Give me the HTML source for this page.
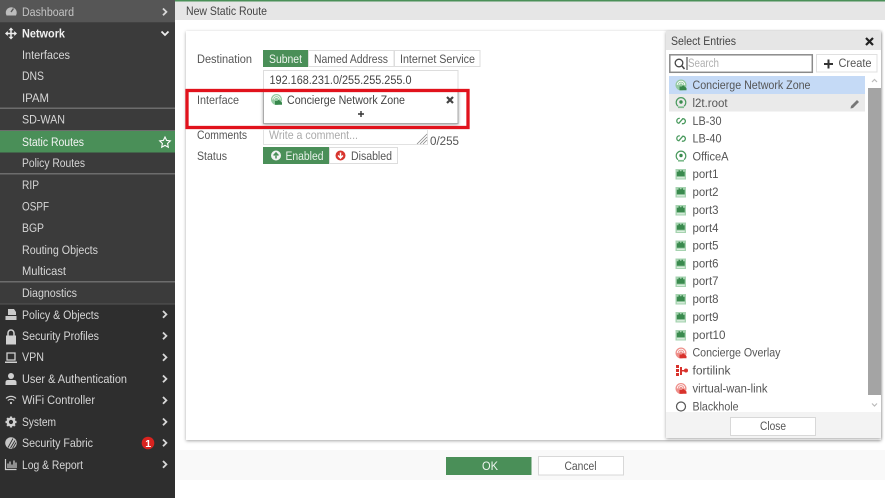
<!DOCTYPE html>
<html><head><meta charset="utf-8"><style>
html,body{margin:0;padding:0;background:#fff;width:885px;height:498px;overflow:hidden}
svg{display:block;filter:blur(.35px)}
text{font-family:"Liberation Sans",sans-serif;font-size:12.2px}
.s text{fill:#d6d6d6}
.m text{fill:#555}
</style></head><body>
<svg width="885" height="498" viewBox="0 0 885 498" xmlns="http://www.w3.org/2000/svg">
<defs>
<filter id="sh" x="-5%" y="-5%" width="110%" height="110%"><feDropShadow dx="0" dy="1" stdDeviation="1.6" flood-color="#000" flood-opacity=".35"/></filter>
<g id="port"><rect x="0" y="0" width="10.500" height="10.500" fill="#a6d3b0"/><path d="M1.300 7.300V2.800H3V1.200H4.500V2.200H6V1.200H7.500V2.800H9.200V7.300Z" fill="#3a8a4e"/><rect x="1.300" y="8.300" width="7.900" height="1" fill="#e8f4ea"/></g>
<g id="ring"><path d="M2.500 9.200A4.800 4.800 0 1 1 8.500 9.200" fill="none" stroke="#4a9a5e" stroke-width="1.200"/><circle cx="5.500" cy="5" r="1.700" fill="#3a8a4e"/><rect x="2.500" y="9.400" width="6" height="1.700" fill="#7dbb8c"/></g>
<g id="loop"><path d="M4.300 1.900A2.500 2.500 0 1 0 3.300 6.800L7.300 2.200A2.500 2.500 0 1 1 6.400 7" fill="none" stroke="#4a9a5e" stroke-width="1.300"/></g>
<g id="zg"><circle cx="5.500" cy="5.500" r="5.500" fill="#93c9a0"/><path d="M1.700 5.500A3.800 3.800 0 0 1 9.300 5.500M3.500 5.500A2 2 0 0 1 7.500 5.500" fill="none" stroke="#fff" stroke-width=".8"/><path d="M4 10.800V7H6.300L7.600 5.800L11 8.500V10.800Z" fill="#37874b"/></g>
<g id="zr"><circle cx="5.500" cy="5.500" r="5.500" fill="#ee8f8a"/><path d="M1.700 5.500A3.800 3.800 0 0 1 9.300 5.500M3.500 5.500A2 2 0 0 1 7.500 5.500" fill="none" stroke="#fff" stroke-width=".8"/><path d="M4 10.800V7H6.300L7.600 5.800L11 8.500V10.800Z" fill="#d8322c"/></g>
<path id="chev" d="M0 0L3.400 3.400L0 6.800" fill="none" stroke="#d8d8d8" stroke-width="1.800"/>
</defs>

<!-- sidebar -->
<rect x="0" y="0" width="175" height="498" fill="#2e2e2e"/>
<rect x="0" y="23" width="175" height="281" fill="#3b3b3b"/>
<rect x="0" y="0" width="175" height="22.500" fill="#565656"/>
<rect x="0" y="107.500" width="175" height="1.500" fill="#6c6c6c"/>
<rect x="0" y="130" width="175" height="1" fill="#6c6c6c"/>
<rect x="0" y="131" width="175" height="21.500" fill="#4a8f58"/>
<rect x="0" y="173" width="175" height="1.500" fill="#6c6c6c"/>
<rect x="0" y="281" width="175" height="1.500" fill="#6c6c6c"/>
<rect x="0" y="303.500" width="175" height="1" fill="#555"/>

<g class="s">
<text x="22" y="16" textLength="52" lengthAdjust="spacingAndGlyphs" style="fill:#c4c4c4">Dashboard</text>
<text x="22" y="37.500" textLength="43" lengthAdjust="spacingAndGlyphs" font-weight="bold" style="fill:#f0f0f0">Network</text>
<text x="22" y="59" textLength="48" lengthAdjust="spacingAndGlyphs">Interfaces</text>
<text x="22" y="80" textLength="22" lengthAdjust="spacingAndGlyphs">DNS</text>
<text x="22" y="102" textLength="27" lengthAdjust="spacingAndGlyphs">IPAM</text>
<text x="22" y="123.500" textLength="43" lengthAdjust="spacingAndGlyphs">SD-WAN</text>
<text x="22" y="146" textLength="62" lengthAdjust="spacingAndGlyphs" style="fill:#f4f4f4">Static Routes</text>
<text x="22" y="167" textLength="63" lengthAdjust="spacingAndGlyphs">Policy Routes</text>
<text x="22" y="189" textLength="17" lengthAdjust="spacingAndGlyphs">RIP</text>
<text x="22" y="210.500" textLength="27" lengthAdjust="spacingAndGlyphs">OSPF</text>
<text x="22" y="232" textLength="22" lengthAdjust="spacingAndGlyphs">BGP</text>
<text x="22" y="254" textLength="76" lengthAdjust="spacingAndGlyphs">Routing Objects</text>
<text x="22" y="275" textLength="44" lengthAdjust="spacingAndGlyphs">Multicast</text>
<text x="22" y="297" textLength="55" lengthAdjust="spacingAndGlyphs">Diagnostics</text>
<text x="22" y="319" textLength="77" lengthAdjust="spacingAndGlyphs">Policy &amp; Objects</text>
<text x="22" y="340" textLength="77" lengthAdjust="spacingAndGlyphs">Security Profiles</text>
<text x="22" y="361" textLength="22" lengthAdjust="spacingAndGlyphs">VPN</text>
<text x="22" y="383" textLength="105" lengthAdjust="spacingAndGlyphs">User &amp; Authentication</text>
<text x="22" y="404" textLength="73" lengthAdjust="spacingAndGlyphs">WiFi Controller</text>
<text x="22" y="426" textLength="34" lengthAdjust="spacingAndGlyphs">System</text>
<text x="22" y="447" textLength="71" lengthAdjust="spacingAndGlyphs">Security Fabric</text>
<text x="22" y="469" textLength="61" lengthAdjust="spacingAndGlyphs">Log &amp; Report</text>
</g>

<!-- sidebar chevrons -->
<use href="#chev" x="163" y="8.500"/>
<path d="M161.500 31.500L165 35L168.500 31.500" fill="none" stroke="#eee" stroke-width="1.800"/>
<use href="#chev" x="163" y="311"/><use href="#chev" x="163" y="332.500"/><use href="#chev" x="163" y="354"/>
<use href="#chev" x="163" y="375.500"/><use href="#chev" x="163" y="397"/><use href="#chev" x="163" y="418.500"/>
<use href="#chev" x="163" y="439.500"/><use href="#chev" x="163" y="461"/>

<!-- sidebar icons -->
<path d="M6.500 15.500A5.500 5.500 0 1 1 16 15.500Z" fill="#bdbdbd"/><path d="M11 12L13.500 8.500" stroke="#565656" stroke-width="1.400"/>
<path d="M11 29V38M6.500 33.500H15.500" stroke="#eee" stroke-width="1.500"/><path d="M11 27.500L13.500 30.300H8.500ZM11 39.500L13.500 36.700H8.500ZM5 33.500L7.800 31V36ZM17 33.500L14.200 31V36Z" fill="#eee"/>
<path d="M165 137L166.600 140.400L170.300 140.900L167.600 143.500L168.300 147.200L165 145.400L161.700 147.200L162.400 143.500L159.700 140.900L163.400 140.400Z" fill="none" stroke="#fff" stroke-width="1.100"/>
<path d="M8 309H14L16 312V315H8ZM5.500 316H16.500V320H5.500Z" fill="#c9c9c9"/>
<path d="M6 335.500H16V344.500H6Z" fill="#d0d0d0"/><path d="M8 335.500V333A3 3 0 0 1 14 333V335.500" fill="none" stroke="#d0d0d0" stroke-width="1.500"/>
<path d="M7 353H15V360H7Z" fill="none" stroke="#d0d0d0" stroke-width="1.300"/><rect x="5" y="361.500" width="12" height="1.500" fill="#d0d0d0"/>
<circle cx="11" cy="376" r="3" fill="#d0d0d0"/><path d="M5.500 385V382.500Q5.500 380 8 380H14Q16.500 380 16.500 382.500V385Z" fill="#d0d0d0"/>
<path d="M6 398.500A7 7 0 0 1 16 398.500M7.800 400.500A4.500 4.500 0 0 1 14.200 400.500" fill="none" stroke="#d0d0d0" stroke-width="1.200"/><circle cx="11" cy="403" r="1.100" fill="#d0d0d0"/>
<circle cx="11" cy="422" r="3.300" fill="none" stroke="#d0d0d0" stroke-width="2.400"/><path d="M11 416.500V419M11 425V427.500M5.500 422H8M14 422H16.500M7.100 418.100L8.800 419.800M13.200 424.200L14.900 425.900M14.900 418.100L13.200 419.800M8.800 424.200L7.100 425.900" stroke="#d0d0d0" stroke-width="2.200"/>
<circle cx="11" cy="443" r="5.800" fill="#c6c6c6"/><path d="M8 447.500L13 438.500M10.500 448L15 440.500M12.500 448.500L16 442.500" stroke="#2e2e2e" stroke-width=".9"/>
<path d="M5.500 459V469.500H16.500" fill="none" stroke="#d0d0d0" stroke-width="1.200"/><path d="M8 468V463.500M10 468V461.500M12 468V464.500M14 468V460.500M16 468V462.500" stroke="#d0d0d0" stroke-width="1.200"/>
<circle cx="148" cy="443" r="6.300" fill="#d8231f"/><text x="145.300" y="447" style="font-size:10.500px;font-weight:bold;fill:#fff">1</text>

<!-- main chrome -->
<rect x="175" y="0" width="710" height="1.500" fill="#4a9058"/>
<rect x="175" y="1.500" width="710" height="18.500" fill="#e6e6e6"/>
<rect x="175" y="450" width="710" height="30" fill="#f9f9f9"/>
<g class="m">
<text x="186" y="15" textLength="81" lengthAdjust="spacingAndGlyphs" style="fill:#444">New Static Route</text>
</g>

<!-- card -->
<rect x="186" y="31" width="695" height="409" fill="#fff" filter="url(#sh)"/>

<g class="m">
<text x="197" y="63" textLength="55" lengthAdjust="spacingAndGlyphs">Destination</text>
<text x="197" y="104" textLength="42" lengthAdjust="spacingAndGlyphs">Interface</text>
<text x="197" y="139" textLength="50" lengthAdjust="spacingAndGlyphs">Comments</text>
<text x="197" y="160" textLength="30" lengthAdjust="spacingAndGlyphs">Status</text>
</g>

<!-- destination buttons -->
<rect x="263" y="50" width="45" height="17" fill="#4a8f58"/>
<rect x="308.500" y="50.500" width="85.500" height="16" fill="#fff" stroke="#ddd"/>
<rect x="394.500" y="50.500" width="85.500" height="16" fill="#fff" stroke="#ddd"/>
<g class="m">
<text x="269" y="63" textLength="33" lengthAdjust="spacingAndGlyphs" style="fill:#eef5ef">Subnet</text>
<text x="314" y="63" textLength="74" lengthAdjust="spacingAndGlyphs">Named Address</text>
<text x="400" y="63" textLength="75" lengthAdjust="spacingAndGlyphs">Internet Service</text>
</g>
<rect x="263.500" y="70.500" width="194.500" height="20" fill="#fff" stroke="#ddd"/>
<text x="269.500" y="84" textLength="142" lengthAdjust="spacingAndGlyphs" style="fill:#444">192.168.231.0/255.255.255.0</text>

<!-- interface box -->
<rect x="263.500" y="90.500" width="194.500" height="33" fill="#fff" stroke="#aaa" filter="url(#sh)"/>
<use href="#zg" x="271" y="94"/>
<text x="287" y="104" textLength="118" lengthAdjust="spacingAndGlyphs" style="fill:#444">Concierge Network Zone</text>
<path d="M447 97L453 103M453 97L447 103" stroke="#444" stroke-width="2.200"/>
<path d="M361 111V117M358 114H364" stroke="#333" stroke-width="1.400"/>
<!-- red highlight -->
<rect x="187" y="90.500" width="281" height="37" fill="none" stroke="#e1121c" stroke-width="3.300"/>

<!-- comments -->
<rect x="263.500" y="129.500" width="164" height="15" fill="#fff" stroke="#e2e2e2"/>
<text x="269" y="139" textLength="89" lengthAdjust="spacingAndGlyphs" style="fill:#aaa">Write a comment...</text>
<path d="M417 144L427 134M420 144L427 137M423 144L427 140" stroke="#888" stroke-width=".8"/>
<text x="430" y="145" textLength="29" lengthAdjust="spacingAndGlyphs" style="fill:#555">0/255</text>

<!-- status -->
<rect x="263" y="147" width="66" height="17" fill="#4a8f58"/>
<rect x="329.500" y="147.500" width="68" height="16" fill="#fff" stroke="#ddd"/>
<circle cx="276" cy="155.500" r="5" fill="#f2f2f2"/><path d="M276 158.500V153M273.600 155.500L276 153L278.400 155.500" stroke="#4a8f58" stroke-width="1.500" fill="none"/>
<circle cx="340.500" cy="155.500" r="5" fill="#d8352e"/><path d="M340.500 152.500V158M338.100 155.500L340.500 158L342.900 155.500" stroke="#fff" stroke-width="1.500" fill="none"/>
<text x="285.500" y="160" textLength="38" lengthAdjust="spacingAndGlyphs" style="fill:#e8f2ea">Enabled</text>
<text x="351" y="160" textLength="41" lengthAdjust="spacingAndGlyphs" style="fill:#555">Disabled</text>

<!-- select panel -->
<rect x="666" y="31" width="215" height="407" fill="#fff" filter="url(#sh)"/>
<rect x="666" y="31" width="215" height="19" fill="#e6e6e6"/>
<text x="671" y="45" textLength="65" lengthAdjust="spacingAndGlyphs" style="fill:#444">Select Entries</text>
<path d="M866 38L873 45M873 38L866 45" stroke="#222" stroke-width="2.200"/>
<rect x="669.800" y="54.800" width="142.500" height="17.500" fill="#fff" stroke="#8a8a8a" stroke-width="1.500"/>
<circle cx="679" cy="63" r="3.800" fill="none" stroke="#444" stroke-width="1.300"/><path d="M682 66L684.500 69" stroke="#444" stroke-width="1.500"/>
<rect x="686.500" y="57" width="1" height="13" fill="#333"/>
<text x="688" y="67" textLength="31" lengthAdjust="spacingAndGlyphs" style="fill:#b0b0b0">Search</text>
<rect x="816.500" y="54.500" width="60.500" height="17.500" fill="#fff" stroke="#e0e0e0"/>
<path d="M828.500 59.500V68.500M824 64H833" stroke="#333" stroke-width="2"/>
<text x="838.500" y="67" textLength="33" lengthAdjust="spacingAndGlyphs" style="fill:#555">Create</text>

<rect x="669" y="76" width="196" height="18" fill="#c5daf6"/>
<rect x="669" y="94" width="196" height="17.500" fill="#eaeaea"/>
<path d="M851 106L857 100L859 102L853 108L850.500 108.500Z" fill="#777"/>

<use href="#zg" x="675.500" y="79.500"/>
<use href="#ring" x="675.500" y="97"/>
<use href="#loop" x="675.500" y="116.500"/>
<use href="#loop" x="675.500" y="134"/>
<use href="#ring" x="675.500" y="150.500"/>
<use href="#port" x="675.500" y="169"/>
<use href="#port" x="675.500" y="187"/>
<use href="#port" x="675.500" y="205"/>
<use href="#port" x="675.500" y="222.500"/>
<use href="#port" x="675.500" y="240.500"/>
<use href="#port" x="675.500" y="258.500"/>
<use href="#port" x="675.500" y="276.500"/>
<use href="#port" x="675.500" y="294"/>
<use href="#port" x="675.500" y="312"/>
<use href="#port" x="675.500" y="330"/>
<use href="#zr" x="675.500" y="347.500"/>
<g fill="#d8322c"><rect x="676" y="365" width="3" height="3"/><rect x="676" y="369" width="3" height="3"/><rect x="676" y="373" width="3" height="3"/><rect x="680" y="367" width="2" height="8"/><rect x="682" y="370" width="3" height="1.500"/><circle cx="686" cy="370.500" r="2"/></g>
<use href="#zr" x="675.500" y="383"/>
<circle cx="681" cy="406.500" r="4.500" fill="none" stroke="#555" stroke-width="1.200"/>

<g class="m">
<text x="692.500" y="89" textLength="118" lengthAdjust="spacingAndGlyphs">Concierge Network Zone</text>
<text x="692.500" y="107" textLength="35" lengthAdjust="spacingAndGlyphs">l2t.root</text>
<text x="692.500" y="125" textLength="29" lengthAdjust="spacingAndGlyphs">LB-30</text>
<text x="692.500" y="142.500" textLength="29" lengthAdjust="spacingAndGlyphs">LB-40</text>
<text x="692.500" y="160.500" textLength="36" lengthAdjust="spacingAndGlyphs">OfficeA</text>
<text x="692.500" y="178" textLength="26" lengthAdjust="spacingAndGlyphs">port1</text>
<text x="692.500" y="196" textLength="26" lengthAdjust="spacingAndGlyphs">port2</text>
<text x="692.500" y="214" textLength="26" lengthAdjust="spacingAndGlyphs">port3</text>
<text x="692.500" y="232" textLength="26" lengthAdjust="spacingAndGlyphs">port4</text>
<text x="692.500" y="249.500" textLength="26" lengthAdjust="spacingAndGlyphs">port5</text>
<text x="692.500" y="267.500" textLength="26" lengthAdjust="spacingAndGlyphs">port6</text>
<text x="692.500" y="285" textLength="26" lengthAdjust="spacingAndGlyphs">port7</text>
<text x="692.500" y="303" textLength="26" lengthAdjust="spacingAndGlyphs">port8</text>
<text x="692.500" y="321" textLength="26" lengthAdjust="spacingAndGlyphs">port9</text>
<text x="692.500" y="339" textLength="33" lengthAdjust="spacingAndGlyphs">port10</text>
<text x="692.500" y="356.500" textLength="88" lengthAdjust="spacingAndGlyphs">Concierge Overlay</text>
<text x="692.500" y="374.500" textLength="38" lengthAdjust="spacingAndGlyphs">fortilink</text>
<text x="692.500" y="392.500" textLength="75" lengthAdjust="spacingAndGlyphs">virtual-wan-link</text>
<text x="692.500" y="410.500" textLength="46" lengthAdjust="spacingAndGlyphs">Blackhole</text>
</g>

<!-- scrollbar -->
<rect x="868" y="88" width="13" height="307" fill="#a4a4a4"/>
<path d="M872 82L874.500 79.500L877 82" fill="none" stroke="#bbb" stroke-width="1.200"/>
<path d="M872 403.500L874.500 406L877 403.500" fill="none" stroke="#bbb" stroke-width="1.200"/>

<!-- panel footer -->
<rect x="666" y="412" width="215" height="26" fill="#f3f3f3"/>
<rect x="730.500" y="417.500" width="85" height="18" fill="#fff" stroke="#d8d8d8"/>
<text x="760" y="430" textLength="26" lengthAdjust="spacingAndGlyphs" style="fill:#555">Close</text>

<!-- bottom buttons -->
<rect x="446" y="457" width="85.500" height="18" fill="#4a8f58"/>
<text x="482" y="470" textLength="16" lengthAdjust="spacingAndGlyphs" style="fill:#eef5ef">OK</text>
<rect x="538.500" y="456.500" width="85" height="18.500" fill="#fff" stroke="#d8d8d8"/>
<text x="564.500" y="470" textLength="32" lengthAdjust="spacingAndGlyphs" style="fill:#555">Cancel</text>
</svg>
</body></html>
